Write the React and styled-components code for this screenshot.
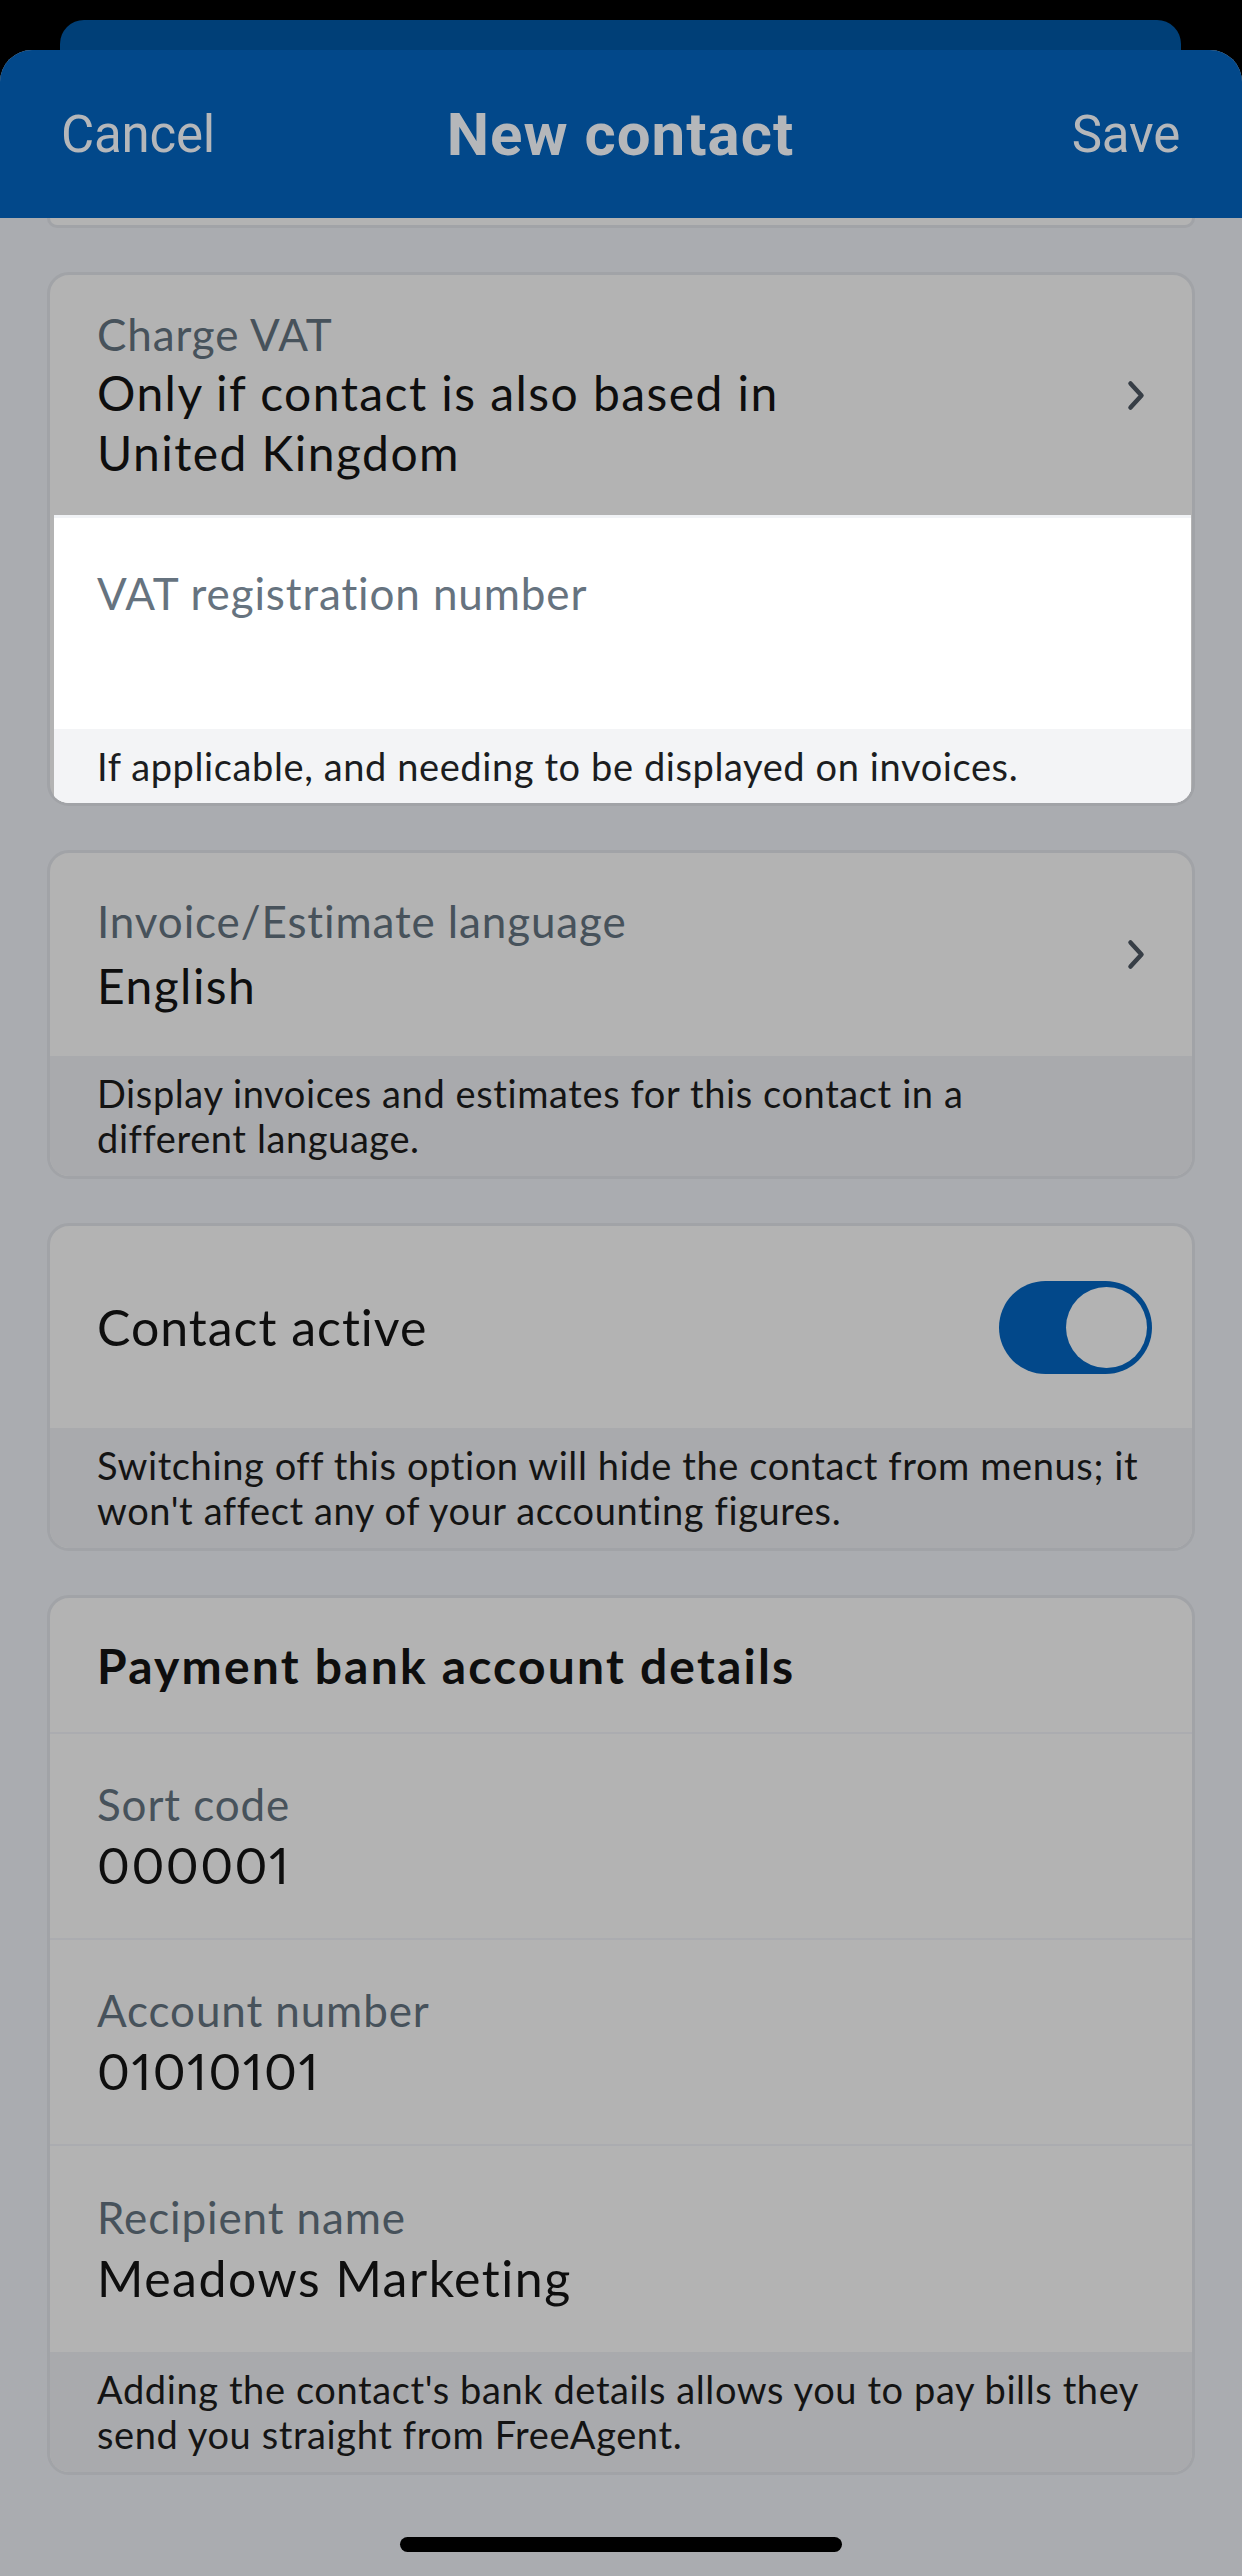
import styled, { createGlobalStyle } from 'styled-components';

const GlobalStyle = createGlobalStyle`
    html, body {
        margin: 0;
        padding: 0;
        background: #000;
    }
    * {
        box-sizing: border-box;
    }
`;

const Screen = styled.div`
    width: 1242px;
    height: 2576px;
    background: #000;
    display: flex;
    flex-direction: column;
    padding-top: 20px;
    overflow: hidden;
    font-family: Lato, "Open Sans", sans-serif;
`;
const BackSheet = styled.div`
    height: 30px;
    margin: 0 61px 0 60px;
    background: #003f77;
    border-radius: 24px 24px 0 0;
`;
const Sheet = styled.div`
    flex: 1;
    display: flex;
    flex-direction: column;
    background: #aaacb0;
    border-radius: 32px 32px 0 0;
    overflow: hidden;
`;
const Header = styled.div`
    height: 168px;
    flex-shrink: 0;
    background: #02488a;
    display: grid;
    grid-template-columns: 1fr auto 1fr;
    align-items: center;
    padding: 0 62px 0 61px;
    font-family: Roboto, "Liberation Sans", sans-serif;
    color: #b5b7ba;
`;
const HeaderButton = styled.div`
    font-size: 51px;
    justify-self: ${(p) => (p.$right ? 'end' : 'start')};
    letter-spacing: -0.2px;
`;
const Title = styled.div`
    font-size: 60px;
    font-weight: 700;
    letter-spacing: 1px;
`;
const Content = styled.div`
    display: flex;
    flex-direction: column;
    gap: 44px;
    padding: 0 47px;
`;
const PrevCardEnd = styled.div`
    height: 10px;
    background: #b3b3b3;
    border: 3px solid #a1a3a7;
    border-top: none;
    border-radius: 0 0 22px 22px;
`;
const Card = styled.div`
    background: #b3b3b3;
    border: 3px solid #a1a3a7;
    border-radius: 22px;
    overflow: hidden;
    display: flex;
    flex-direction: column;
`;
const Cell = styled.div`
    height: ${(p) => p.$h}px;
    display: flex;
    align-items: center;
    justify-content: space-between;
    padding: 0 47px 0 47px;
    border-top: ${(p) => (p.$divider ? '2px solid #abacb0' : 'none')};
`;
const Field = styled.div`
    display: flex;
    flex-direction: column;
    gap: ${(p) => p.$gap || 0}px;
`;
const Label = styled.div`
    font-size: 44px;
    line-height: 52px;
    color: ${(p) => (p.$lit ? '#66737f' : '#47525b')};
    letter-spacing: 0.02em;
    white-space: nowrap;
`;
const Value = styled.div`
    font-size: ${(p) => p.$size || 48}px;
    line-height: ${(p) => p.$lh || 58}px;
    color: #0e0e0e;
    letter-spacing: 0.03em;
    font-variant-numeric: proportional-nums;
    white-space: nowrap;
`;
const BigText = styled.div`
    font-size: 50px;
    color: #0e0e0e;
    letter-spacing: 0.02em;
`;
const SectionTitle = styled.div`
    font-size: 48px;
    font-weight: 700;
    color: #0e0e0e;
    letter-spacing: 2.2px;
`;
const Spotlight = styled.div`
    margin: 0 1px 0 4px;
    background: #fff;
    border-top: 3px solid #f1f3f6;
    display: flex;
    flex-direction: column;
`;
const InputArea = styled.div`
    height: 211px;
    padding: 49px 43px 0;
`;
const Help = styled.div`
    padding: 15px 20px ${(p) => p.$pb || 15}px ${(p) => (p.$lit ? 43 : 47)}px;
    background: ${(p) => (p.$lit ? '#f3f4f6' : '#a9aaad')};
    color: ${(p) => (p.$lit ? '#1b1d20' : '#141414')};
    font-size: 38px;
    line-height: 45px;
    letter-spacing: 0.6px;
    white-space: nowrap;
`;
const Toggle = styled.div`
    width: 153px;
    height: 93px;
    border-radius: 47px;
    background: #02488a;
    display: flex;
    align-items: center;
    justify-content: flex-end;
    padding-right: 5px;
    margin-right: -7px;
`;
const Knob = styled.div`
    width: 81px;
    height: 81px;
    border-radius: 50%;
    background: #b3b3b3;
`;
const HomeBar = styled.div`
    width: 442px;
    height: 15px;
    border-radius: 8px;
    background: #000;
    align-self: center;
    margin: auto 0 24px;
`;

const Chevron = () => (
    <svg width="18" height="31" viewBox="0 0 18 31">
        <path d="M3.5 3.5 L14.5 15.5 L3.5 27.5" fill="none" stroke="#373e46" strokeWidth="4.5" strokeLinecap="round" strokeLinejoin="round" />
    </svg>
);

const App = () => {
    return (
        <Screen>
            <GlobalStyle />
            <BackSheet />
            <Sheet>
                <Header>
                    <HeaderButton>Cancel</HeaderButton>
                    <Title>New contact</Title>
                    <HeaderButton $right>Save</HeaderButton>
                </Header>
                <Content>
                    <PrevCardEnd />
                    <Card>
                        <Cell $h={240}>
                            <Field $gap={3}>
                                <Label>Charge VAT</Label>
                                <Value $lh={60}>Only if contact is also based in<br />United Kingdom</Value>
                            </Field>
                            <Chevron />
                        </Cell>
                        <Spotlight>
                            <InputArea>
                                <Label $lit>VAT registration number</Label>
                            </InputArea>
                            <Help $lit $pb={14}>If applicable, and needing to be displayed on invoices.</Help>
                        </Spotlight>
                    </Card>
                    <Card>
                        <Cell $h={203}>
                            <Field $gap={10}>
                                <Label>Invoice/Estimate language</Label>
                                <Value>English</Value>
                            </Field>
                            <Chevron />
                        </Cell>
                        <Help>Display invoices and estimates for this contact in a<br />different language.</Help>
                    </Card>
                    <Card>
                        <Cell $h={202}>
                            <BigText>Contact active</BigText>
                            <Toggle><Knob /></Toggle>
                        </Cell>
                        <Help>Switching off this option will hide the contact from menus; it<br />won't affect any of your accounting figures.</Help>
                    </Card>
                    <Card>
                        <Cell $h={134}>
                            <SectionTitle>Payment bank account details</SectionTitle>
                        </Cell>
                        <Cell $h={206} $divider>
                            <Field $gap={6}>
                                <Label>Sort code</Label>
                                <Value $size={50}>000001</Value>
                            </Field>
                        </Cell>
                        <Cell $h={206} $divider>
                            <Field $gap={6}>
                                <Label>Account number</Label>
                                <Value $size={50}>01010101</Value>
                            </Field>
                        </Cell>
                        <Cell $h={208} $divider>
                            <Field $gap={6}>
                                <Label>Recipient name</Label>
                                <Value $size={50}>Meadows Marketing</Value>
                            </Field>
                        </Cell>
                        <Help>Adding the contact's bank details allows you to pay bills they<br />send you straight from FreeAgent.</Help>
                    </Card>
                </Content>
                <HomeBar />
            </Sheet>
        </Screen>
    );
};

export default App;
